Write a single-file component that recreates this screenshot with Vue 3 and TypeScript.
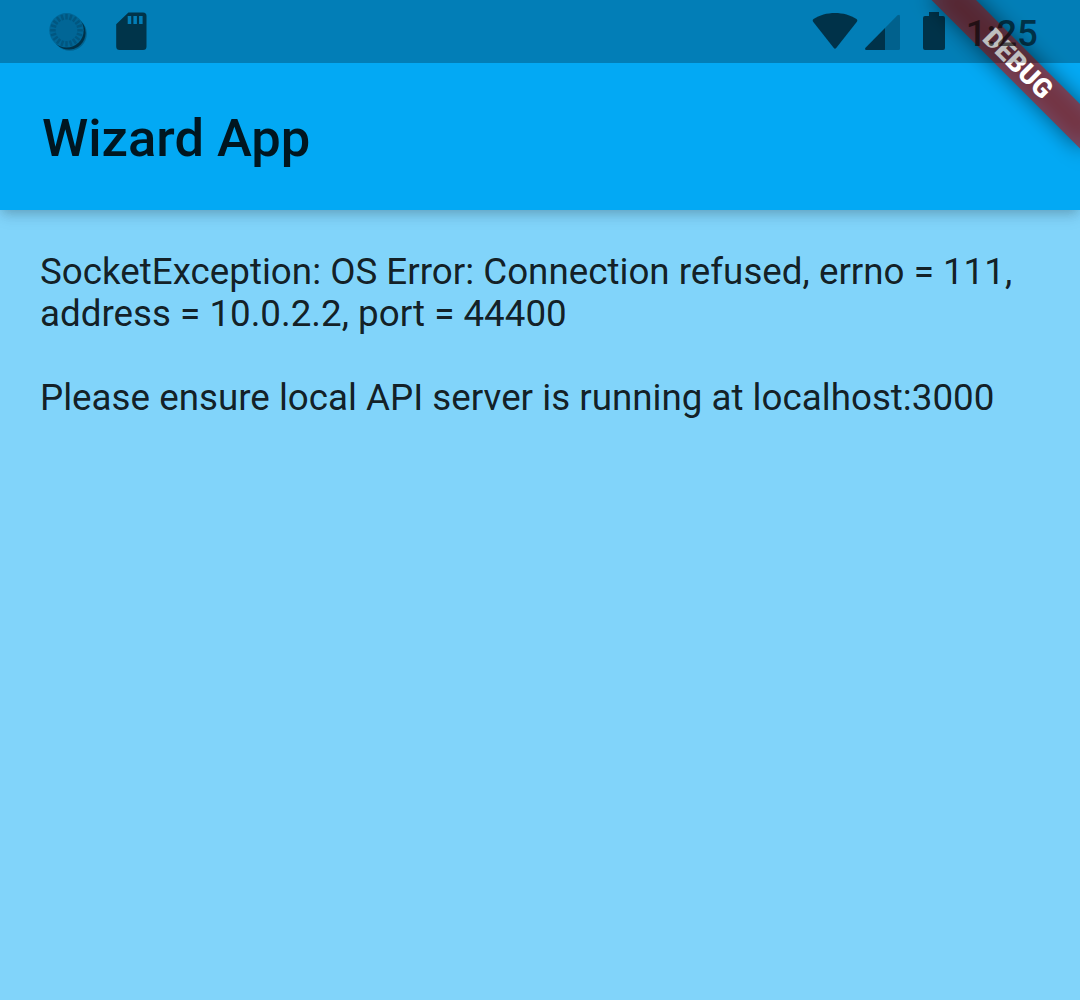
<script setup lang="ts">
const title = 'Wizard App'
const time = '1:25'
const errorText = 'SocketException: OS Error: Connection refused, errno = 111, address = 10.0.2.2, port = 44400'
const hint = 'Please ensure local API server is running at localhost:3000'
const ticks = Array.from({ length: 20 }, (_, i) => i * 18)
</script>

<template>
  <div class="screen">
    <header class="app-bar">
      <h1>{{ title }}</h1>
    </header>
    <main class="content">
      <p>{{ errorText }}</p>
      <p>{{ hint }}</p>
    </main>

    <svg class="banner" width="240" height="240" viewBox="-240 0 240 240">
      <defs>
        <filter id="soft" x="-50%" y="-200%" width="200%" height="500%">
          <feGaussianBlur stdDeviation="10.4" />
        </filter>
      </defs>
      <g transform="rotate(45)">
        <rect x="-105" y="73.5" width="210" height="31.5" fill="#000" fill-opacity=".498" filter="url(#soft)" />
        <rect x="-105" y="73.5" width="210" height="31.5" fill="#b71c1c" fill-opacity=".627" />
        <text x="1.2" y="98" text-anchor="middle">DEBUG</text>
      </g>
    </svg>

    <div class="status-bar">
      <div class="left">
        <svg class="spinner" width="42" height="42" viewBox="0 0 42 42">
          <circle cx="22.8" cy="22.8" r="17" fill="#003249" fill-opacity=".35" />
          <circle cx="21.8" cy="21.8" r="16.8" fill="#003249" />
          <circle cx="19.5" cy="19.3" r="17.2" fill="#016696" />
          <g stroke="#015781" stroke-width="2.4">
            <line v-for="a in ticks" :key="a" x1="19.5" y1="3" x2="19.5" y2="8.5" :transform="`rotate(${a} 19.5 19.3)`" />
          </g>
        </svg>
        <svg class="card" width="32" height="40" viewBox="0 0 32 40">
          <path fill="#00344a" fill-rule="evenodd" d="M12.4 1.5H27Q30.5 1.5 30.5 5V35.5Q30.5 39 27 39H3.7Q.2 39 .2 35.5V13.2ZM11.7 5V13H15.2V5ZM17.4 5V13H20.9V5ZM23.1 5V13H26.6V5Z" />
        </svg>
      </div>
      <div class="right">
        <svg class="wifi" width="46" height="38" viewBox="0 0 46 38">
          <path d="M1.5 7.1C13-1.1 33-1.1 44.5 7.1Q46 8.3 44.7 10L24.2 36Q23 37.5 21.8 36L1.3 10Q0 8.3 1.5 7.1Z" />
        </svg>
        <svg class="signal" width="36" height="36" viewBox="0 0 36 36">
          <path fill-opacity=".38" d="M20 14L32.5 1.3Q35 -.4 35 2.4V34.5Q35 36 33.5 36H20Z" />
          <path d="M20 14V36H1.2Q-.6 35.5 .5 33.8Z" />
        </svg>
        <svg class="battery" width="22" height="38" viewBox="0 0 22 38">
          <path d="M6 0H16V4H20Q22 4 22 6V36Q22 38 20 38H2Q0 38 0 36V6Q0 4 2 4H6Z" />
        </svg>
        <span class="time">{{ time }}</span>
      </div>
    </div>
  </div>
</template>

<style>
body {
  margin: 0;
}
</style>

<style scoped>
.screen {
  position: relative;
  width: 1080px;
  height: 1000px;
  overflow: hidden;
  background: #81d4fa;
  font-family: Roboto, sans-serif;
}
.app-bar {
  position: relative;
  box-sizing: border-box;
  height: 210px;
  padding: 65px 42px 0;
  display: flex;
  align-items: center;
  background: #03a9f4;
  box-shadow: 0 5px 10px -3px rgba(0, 0, 0, 0.14), 0 8px 16px rgba(0, 0, 0, 0.06), 0 3px 14px rgba(0, 0, 0, 0.08);
}
h1 {
  margin: 0;
  font-size: 52.5px;
  line-height: 62px;
  font-weight: 500;
  color: rgba(0, 0, 0, 0.87);
}
.content {
  padding: 41px 39px 41px 40px;
  display: flex;
  flex-direction: column;
  gap: 42px;
}
.content p {
  margin: 0;
  font-size: 36.75px;
  line-height: 42px;
  color: rgba(0, 0, 0, 0.87);
}
.banner {
  position: absolute;
  top: 0;
  right: 0;
}
.banner text {
  font: 900 26.8px Roboto, sans-serif;
  fill: #fff;
}
.status-bar {
  position: absolute;
  top: 0;
  left: 0;
  box-sizing: border-box;
  width: 1080px;
  height: 63px;
  padding: 0 42px 0 47px;
  display: flex;
  justify-content: space-between;
  align-items: flex-start;
  background: rgba(0, 0, 0, 0.25);
}
.left,
.right {
  display: flex;
  align-items: flex-start;
}
.right svg {
  fill: rgba(0, 0, 0, 0.6);
}
.spinner {
  margin-top: 10.5px;
}
.card {
  margin: 11px 0 0 27px;
}
.wifi {
  margin-top: 12px;
}
.signal {
  margin: 14px 0 0 7px;
}
.battery {
  margin: 12px 0 0 22px;
}
.time {
  margin: 12px 0 0 21px;
  font-size: 36.75px;
  line-height: 43px;
  font-weight: 500;
  color: rgba(0, 0, 0, 0.6);
}
</style>
